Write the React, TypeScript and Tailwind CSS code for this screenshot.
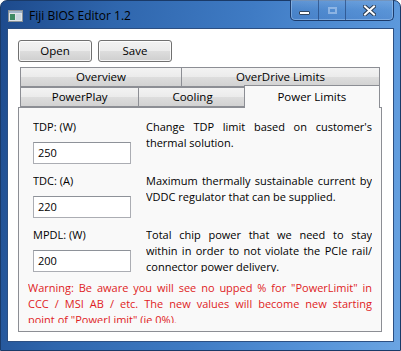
import React from "react";

const font = { fontFamily: '"Open Sans", "Noto Sans", sans-serif' };

function JLine({ children, last }: { children: React.ReactNode; last?: boolean }) {
  return (
    <div
      className={
        "whitespace-nowrap h-[16px] leading-[16px] " +
        (last ? "text-left" : "text-justify [text-align-last:justify]")
      }
    >
      {children}
    </div>
  );
}

function Btn({ label }: { label: string }) {
  return (
    <div className="w-[74px] h-[22px] rounded-[3px] border border-[#707070] bg-[linear-gradient(180deg,#f2f2f2_0%,#ebebeb_50%,#dddddd_51%,#cfcfcf_100%)] shadow-[inset_0_0_0_1px_rgba(255,255,255,0.8)] flex items-center justify-center text-[11.5px] text-black">
      {label}
    </div>
  );
}

function Tab({ label, className }: { label: string; className: string }) {
  return (
    <div
      className={
        "h-[20px] border border-[#8c8e94] bg-[linear-gradient(180deg,#f3f3f3_0%,#ebebeb_50%,#dddddd_51%,#d2d2d2_100%)] flex items-center justify-center text-[11.5px] text-black " +
        className
      }
    >
      {label}
    </div>
  );
}

function Field({ label, value, desc }: { label: string; value: string; desc: React.ReactNode }) {
  return (
    <div className="flex h-[45px] overflow-hidden">
      <div className="w-[98px] flex flex-col">
        <div className="h-[16px] leading-[16px]">{label}</div>
        <div className="mt-[7px] h-[22px] border border-[#abadb3] border-t-[#8e9299] bg-white flex items-center pl-[4px]">
          {value}
        </div>
      </div>
      <div className="ml-[15px] w-[226px] overflow-hidden">{desc}</div>
    </div>
  );
}

export default function App() {
  return (
    <div className="w-[401px] h-[351px] bg-white text-black" style={font}>
      <div className="w-full h-full rounded-t-[7px] border border-[#1a3a68] bg-[linear-gradient(100deg,#1d4a8c_0%,#2f66ad_25%,#3f7bc4_55%,#5592d8_80%,#6aa4e2_100%)] flex flex-col">
        {/* Title bar */}
        <div className="h-[27px] flex items-start justify-between">
          <div className="flex items-center pl-[7px] pt-[8px]">
            <svg width="15" height="12" viewBox="0 0 15 12">
              <rect x="0.5" y="0.5" width="14" height="11" fill="#dfe4e8" stroke="#8a9298" />
              <rect x="1" y="1" width="13" height="2" fill="#9fb4c8" />
              <rect x="2" y="4" width="5" height="6" fill="#3d8a63" />
              <rect x="8" y="4" width="5" height="6" fill="#c9d7df" />
            </svg>
            <span className="ml-[6px] text-[12px] leading-[14px] text-black">Fiji BIOS Editor 1.2</span>
          </div>
          <div className="mr-[6px] -mt-[1px] h-[21px] flex rounded-b-[5px] border border-t-0 border-[#1c3b6b] shadow-[inset_0_0_0_1px_rgba(180,210,245,0.45)] bg-[linear-gradient(180deg,rgba(160,195,235,0.3)_0%,rgba(90,140,200,0.2)_50%,rgba(70,120,190,0.3)_100%)] overflow-hidden">
            <div className="w-[28px] flex items-center justify-center border-r border-[rgba(30,60,110,0.6)]">
              <div className="w-[11px] h-[4px] mt-[5px] bg-white border border-[#33465f] rounded-[1px]" />
            </div>
            <div className="w-[27px] flex items-center justify-center border-r border-[rgba(30,60,110,0.6)]">
              <div className="w-[9px] h-[7px] border-2 border-[rgba(200,220,245,0.5)]" />
            </div>
            <div className="w-[47px] flex items-center justify-center">
              <svg width="13" height="11" viewBox="0 0 13 11">
                <path d="M2 1.5 L11 9.5 M11 1.5 L2 9.5" stroke="#2c3e55" strokeWidth="4" strokeLinecap="square" />
                <path d="M2 1.5 L11 9.5 M11 1.5 L2 9.5" stroke="#ffffff" strokeWidth="2" strokeLinecap="square" />
              </svg>
            </div>
          </div>
        </div>

        {/* Client area */}
        <div className="ml-[6px] w-[387px] h-[314px] border border-[#2c4f82] bg-white pl-[10px] pt-[11px] flex flex-col">
          <div className="flex gap-[6px]">
            <Btn label="Open" />
            <Btn label="Save" />
          </div>

          <div className="mt-[5px] w-[364px]">
            <div className="px-[2px]">
              <div className="flex">
                <Tab label="Overview" className="w-[162px]" />
                <Tab label="OverDrive Limits" className="w-[199px] -ml-px" />
              </div>
              <div className="flex">
                <Tab label="PowerPlay" className="w-[120px]" />
                <Tab label="Cooling" className="w-[109px] -ml-px" />
                <div className="relative z-10 w-[137px] h-[23px] -ml-[3px] -mt-[2px] border border-b-0 border-[#8c8e94] bg-[#f9f9f9] flex items-start justify-center pt-[2px] text-[11.5px]">
                  Power Limits
                </div>
              </div>
            </div>
            <div className="-mt-px h-[225px] border border-[#8c8e94] bg-[#f9f9f9] pl-[14px] pt-[11px] text-[11px]">
              <Field
                label="TDP: (W)"
                value="250"
                desc={
                  <>
                    <JLine>Change TDP limit based on customer's</JLine>
                    <JLine last>thermal solution.</JLine>
                  </>
                }
              />
              <div className="mt-[9px]">
                <Field
                  label="TDC: (A)"
                  value="220"
                  desc={
                    <>
                      <JLine>Maximum thermally sustainable current by</JLine>
                      <JLine last>VDDC regulator that can be supplied.</JLine>
                    </>
                  }
                />
              </div>
              <div className="mt-[9px]">
                <Field
                  label="MPDL: (W)"
                  value="200"
                  desc={
                    <>
                      <JLine>Total chip power that we need to stay</JLine>
                      <JLine>within in order to not violate the PCIe rail/</JLine>
                      <JLine last>connector power delivery.</JLine>
                    </>
                  }
                />
              </div>
              <div className="mt-[8px] -ml-[5px] w-[344px] h-[43px] overflow-hidden text-[#df1c24]">
                <JLine>Warning: Be aware you will see no upped % for "PowerLimit" in</JLine>
                <JLine>CCC / MSI AB / etc. The new values will become new starting</JLine>
                <JLine last>point of "PowerLimit" (ie 0%).</JLine>
              </div>
            </div>
          </div>
        </div>
      </div>
    </div>
  );
}
